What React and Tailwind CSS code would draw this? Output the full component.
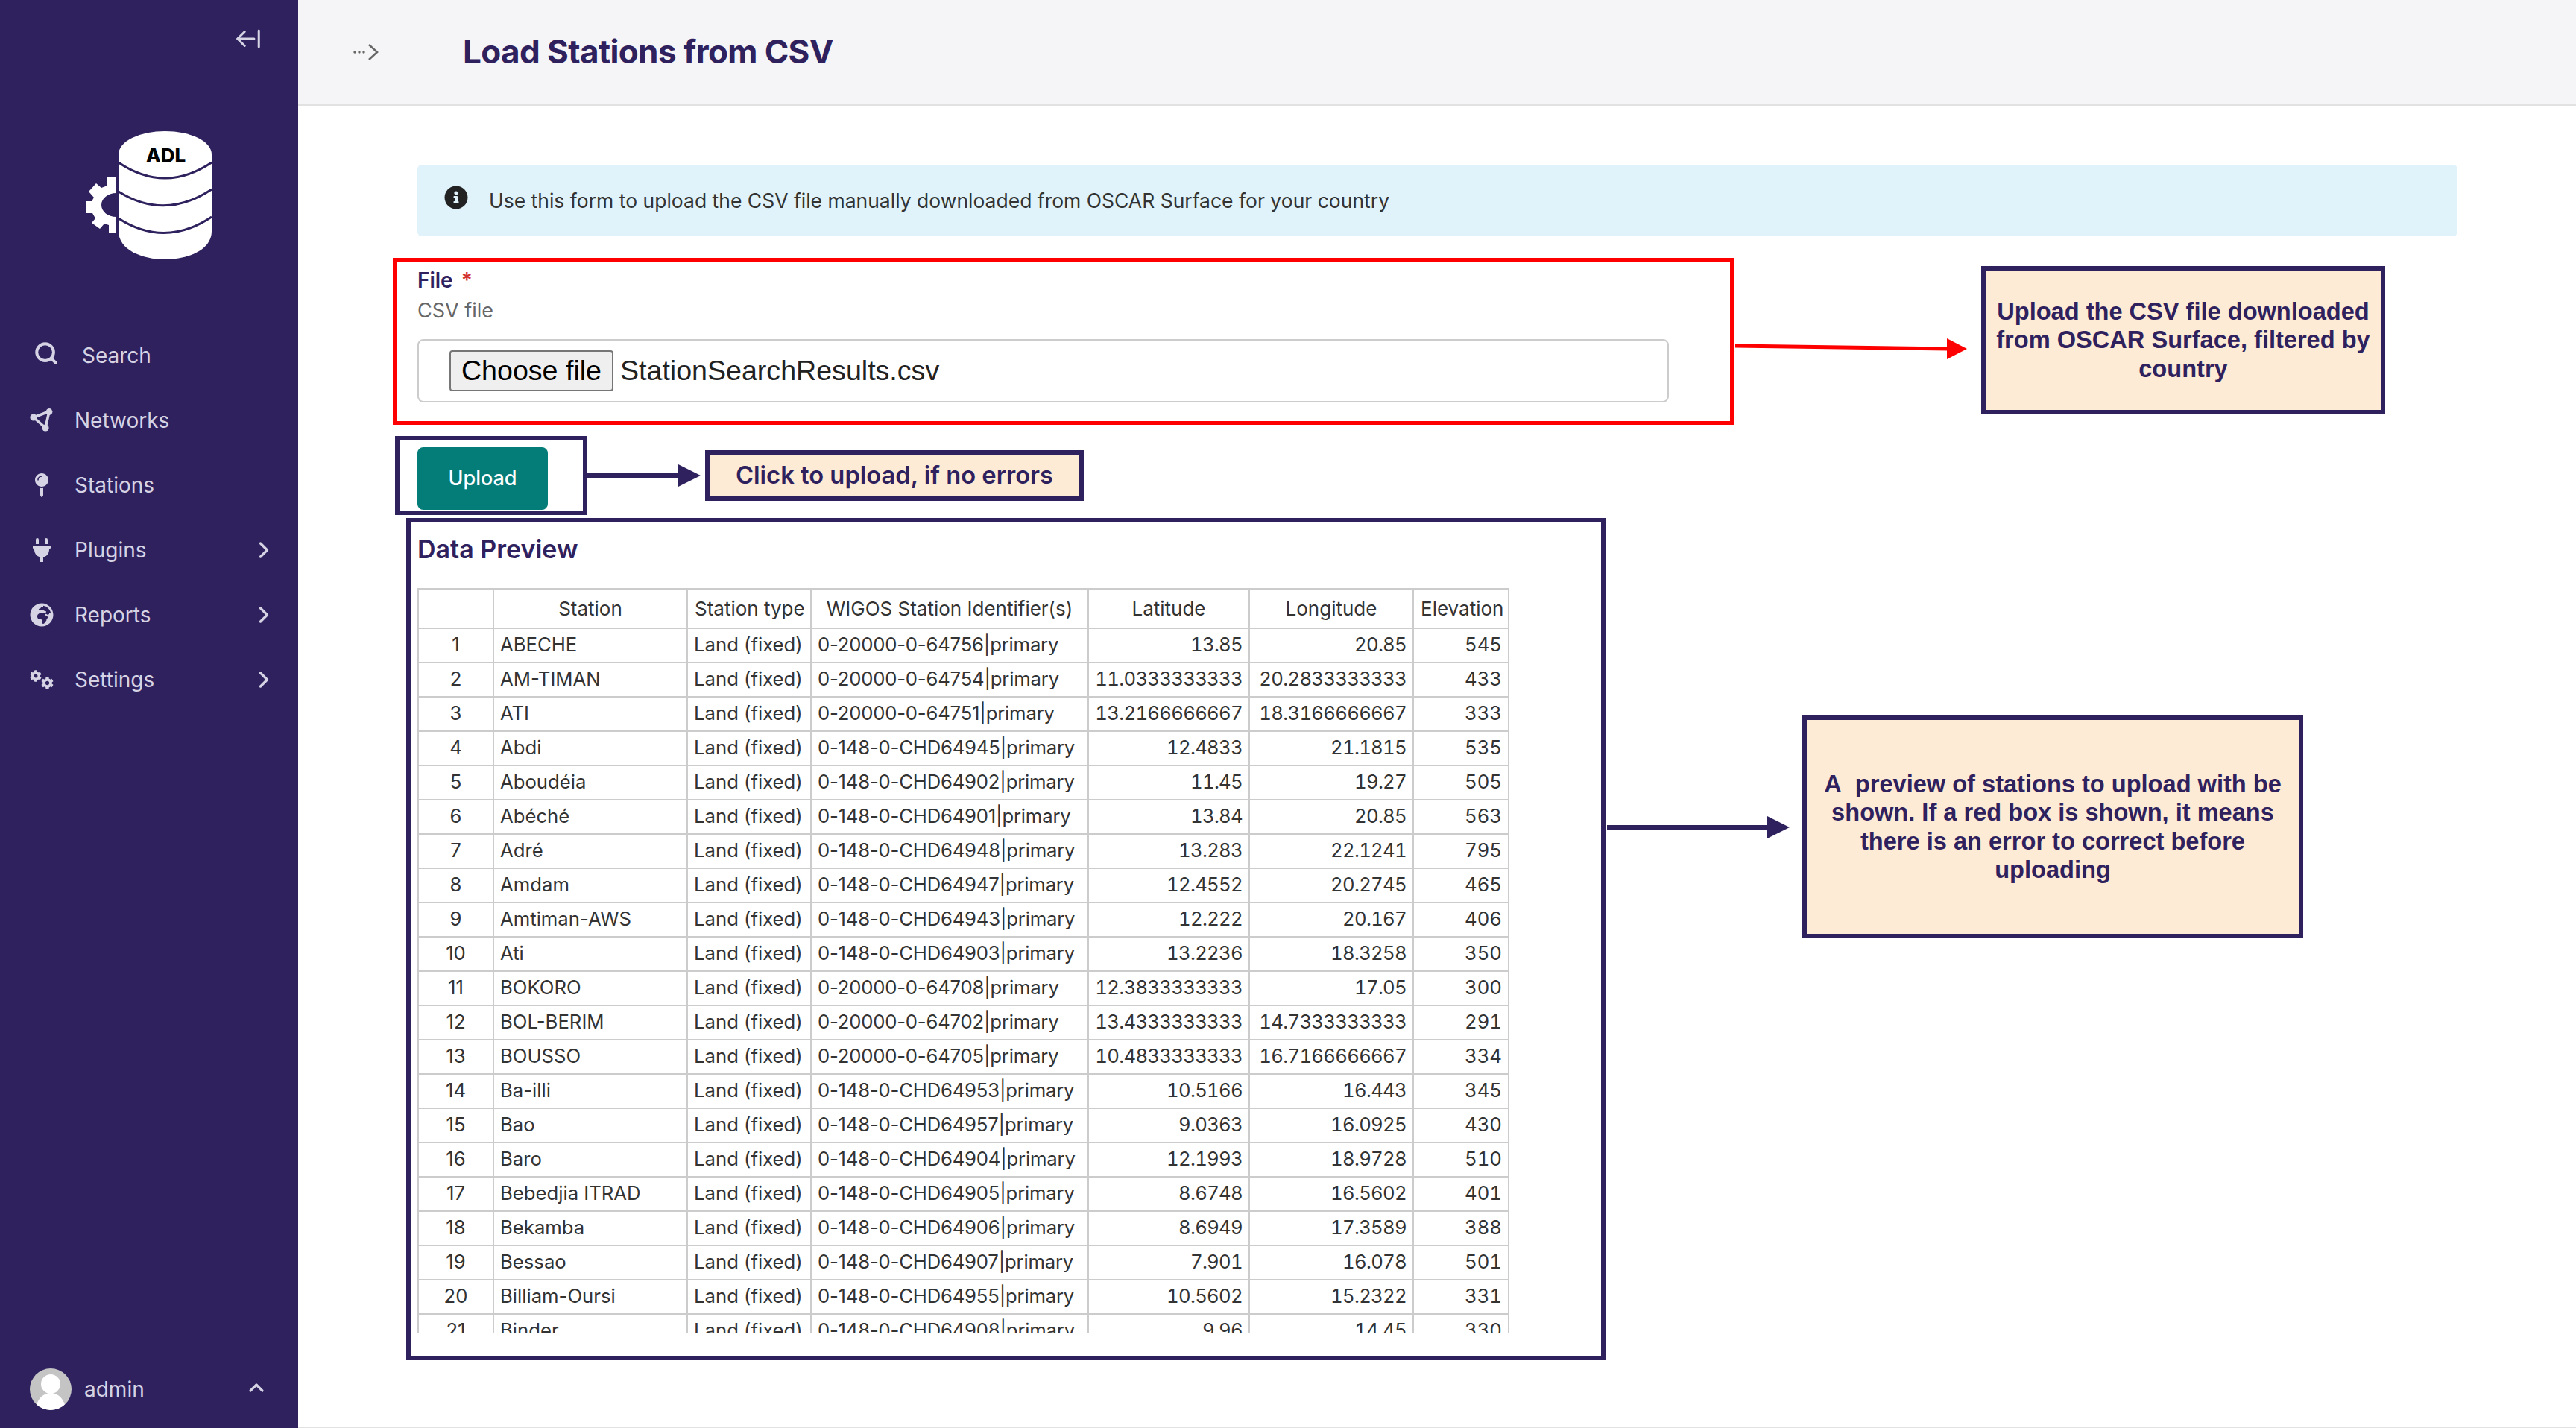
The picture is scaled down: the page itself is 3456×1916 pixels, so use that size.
import React from 'react';
import { ArrowLeftFromLine, ChevronRight, ChevronUp, Search } from 'lucide-react';
import { FaCog, FaGlobeAfrica, FaInfoCircle, FaMapPin, FaPlug } from 'react-icons/fa';

const rows = [
    ['ABECHE', '0-20000-0-64756|primary', '13.85', '20.85', '545'],
    ['AM-TIMAN', '0-20000-0-64754|primary', '11.0333333333', '20.2833333333', '433'],
    ['ATI', '0-20000-0-64751|primary', '13.2166666667', '18.3166666667', '333'],
    ['Abdi', '0-148-0-CHD64945|primary', '12.4833', '21.1815', '535'],
    ['Aboudéia', '0-148-0-CHD64902|primary', '11.45', '19.27', '505'],
    ['Abéché', '0-148-0-CHD64901|primary', '13.84', '20.85', '563'],
    ['Adré', '0-148-0-CHD64948|primary', '13.283', '22.1241', '795'],
    ['Amdam', '0-148-0-CHD64947|primary', '12.4552', '20.2745', '465'],
    ['Amtiman-AWS', '0-148-0-CHD64943|primary', '12.222', '20.167', '406'],
    ['Ati', '0-148-0-CHD64903|primary', '13.2236', '18.3258', '350'],
    ['BOKORO', '0-20000-0-64708|primary', '12.3833333333', '17.05', '300'],
    ['BOL-BERIM', '0-20000-0-64702|primary', '13.4333333333', '14.7333333333', '291'],
    ['BOUSSO', '0-20000-0-64705|primary', '10.4833333333', '16.7166666667', '334'],
    ['Ba-illi', '0-148-0-CHD64953|primary', '10.5166', '16.443', '345'],
    ['Bao', '0-148-0-CHD64957|primary', '9.0363', '16.0925', '430'],
    ['Baro', '0-148-0-CHD64904|primary', '12.1993', '18.9728', '510'],
    ['Bebedjia ITRAD', '0-148-0-CHD64905|primary', '8.6748', '16.5602', '401'],
    ['Bekamba', '0-148-0-CHD64906|primary', '8.6949', '17.3589', '388'],
    ['Bessao', '0-148-0-CHD64907|primary', '7.901', '16.078', '501'],
    ['Billiam-Oursi', '0-148-0-CHD64955|primary', '10.5602', '15.2322', '331'],
    ['Binder', '0-148-0-CHD64908|primary', '9.96', '14.45', '330'],
];

const NetworkIcon = () => (
    <svg width="32" height="32" viewBox="0 0 32 32" fill="none" stroke="#d6d3e4" strokeWidth="3.6">
        <path d="M5 12 L26 4 L21 26 Z" strokeLinejoin="round" />
        <circle cx="5" cy="12" r="4.6" fill="#d6d3e4" stroke="none" />
        <circle cx="26" cy="4.5" r="4.4" fill="#d6d3e4" stroke="none" />
        <circle cx="21" cy="26" r="4.6" fill="#d6d3e4" stroke="none" />
    </svg>
);

const SettingsIcon = () => (
    <svg width="32" height="26" viewBox="0 0 32 26">
        <FaCog size={16} x={0} y={0} />
        <FaCog size={17} x={15} y={9} />
    </svg>
);

const navItems = [
    { label: 'Search', icon: <Search size={34} strokeWidth={2.8} className="-mt-[6px]" />, iconClass: 'ml-[45px] w-[34px]', textClass: 'ml-[31px]' },
    { label: 'Networks', icon: <NetworkIcon />, iconClass: 'ml-[40px] w-[32px]', textClass: 'ml-[28px]' },
    { label: 'Stations', icon: <FaMapPin size={32} />, iconClass: 'ml-[40px] w-[32px]', textClass: 'ml-[28px]' },
    { label: 'Plugins', icon: <FaPlug size={32} />, iconClass: 'ml-[40px] w-[32px]', textClass: 'ml-[28px]', more: true },
    { label: 'Reports', icon: <FaGlobeAfrica size={32} />, iconClass: 'ml-[40px] w-[32px]', textClass: 'ml-[28px]', more: true },
    { label: 'Settings', icon: <SettingsIcon />, iconClass: 'ml-[40px] w-[32px]', textClass: 'ml-[28px]', more: true },
];

function Logo() {
    return (
        <svg width="172" height="176" viewBox="114 174 172 176" className="ml-[114px] mt-[103px] block">
            <path d="M156 238 L144 238 L144 249 L136 252 L129 246 L119 257 L126 265 L123 270 L116 270 L116 286 L124 286 L128 293 L123 299 L134 307 L140 300 L146 302 L146 312 L156 312 L156 291 C145 291 136 284 136 275 C136 266 145 259 156 259 Z" fill="#fff" />
            <path d="M159 207 V310 C159 335 190 348 221.5 348 C253 348 284 335 284 310 V207 Z" fill="#fff" />
            <ellipse cx="221.5" cy="207" rx="62.5" ry="31" fill="#fff" />
            <path d="M159 218 Q221 260 284 218" fill="none" stroke="#2e215d" strokeWidth="3" />
            <path d="M159 257 Q221 296 284 254" fill="none" stroke="#2e215d" strokeWidth="3" />
            <path d="M159 293 Q221 333 284 291" fill="none" stroke="#2e215d" strokeWidth="3" />
            <text x="222.5" y="218" textAnchor="middle" fontFamily="Inter" fontWeight="800" fontSize="26" fill="#000">ADL</text>
        </svg>
    );
}

function Sidebar() {
    return (
        <aside className="w-[400px] h-full flex flex-col shrink-0 bg-[#2e215d] text-[#d6d3e4]">
            <div className="flex justify-end pt-[33px] pr-[48px]">
                <ArrowLeftFromLine size={38} strokeWidth={1.9} />
            </div>
            <Logo />
            <nav className="mt-[83px]">
                {navItems.map((item) => (
                    <div key={item.label} className="flex items-center h-[87px] text-[28px]">
                        <span className={`flex justify-center ${item.iconClass}`}>{item.icon}</span>
                        <span className={item.textClass}>{item.label}</span>
                        {item.more && <ChevronRight size={36} strokeWidth={2.2} className="ml-auto mr-[28px]" />}
                    </div>
                ))}
            </nav>
            <div className="mt-auto mb-[24px] flex items-center pl-[40px] text-[28px]">
                <svg width="56" height="56" viewBox="0 0 56 56">
                    <clipPath id="avatar-clip"><circle cx="28" cy="28" r="28" /></clipPath>
                    <g clipPath="url(#avatar-clip)">
                        <rect width="56" height="56" fill="#c4c4c4" />
                        <ellipse cx="28" cy="21" rx="13" ry="13" fill="#fff" />
                        <ellipse cx="28" cy="56" rx="20" ry="23" fill="#fff" />
                    </g>
                </svg>
                <span className="ml-[17px]">admin</span>
                <ChevronUp size={32} strokeWidth={2.4} className="ml-auto mr-[40px] -mt-[4px]" />
            </div>
        </aside>
    );
}

function Callout({ className, children }) {
    return (
        <div className={`absolute flex items-center justify-center text-center border-[6px] border-[#2e215d] bg-[#fdebd5] text-[#2e215d] font-bold font-['Liberation_Sans',sans-serif] text-[32.6px] leading-[38.5px] ${className}`}>
            <div>{children}</div>
        </div>
    );
}

function DataTable() {
    const th = 'border-2 border-[#cccccc] font-normal text-center px-[9px] whitespace-nowrap';
    const td = 'border-2 border-[#cccccc] px-[8px] pb-[2px] whitespace-nowrap text-[25.7px]';
    return (
        <div className="ml-[9px] mt-[28px] h-[1000px] overflow-hidden">
            <table className="table-fixed border-collapse w-[1463px] text-[26px] text-[#333333]">
                <colgroup>
                    <col className="w-[101px]" />
                    <col className="w-[260px]" />
                    <col className="w-[166px]" />
                    <col className="w-[372px]" />
                    <col className="w-[216px]" />
                    <col className="w-[220px]" />
                    <col className="w-[128px]" />
                </colgroup>
                <thead>
                    <tr className="h-[53px]">
                        <th className={th}></th>
                        <th className={th}>Station</th>
                        <th className={th}>Station type</th>
                        <th className={th}>WIGOS Station Identifier(s)</th>
                        <th className={th}>Latitude</th>
                        <th className={th}>Longitude</th>
                        <th className={th}>Elevation</th>
                    </tr>
                </thead>
                <tbody>
                    {rows.map((row, i) => (
                        <tr key={row[0]} className="h-[46px]">
                            <td className={`${td} text-center`}>{i + 1}</td>
                            <td className={td}>{row[0]}</td>
                            <td className={td}>Land (fixed)</td>
                            <td className={`${td} tracking-[-0.2px]`}>{row[1]}</td>
                            <td className={`${td} text-right tabular-nums tracking-[-0.7px]`}>{row[2]}</td>
                            <td className={`${td} text-right tabular-nums tracking-[-0.7px]`}>{row[3]}</td>
                            <td className={`${td} text-right tabular-nums`}>{row[4]}</td>
                        </tr>
                    ))}
                </tbody>
            </table>
        </div>
    );
}

export default function App() {
    return (
        <div className="relative flex w-[3456px] h-[1916px] overflow-hidden bg-white font-['Inter',sans-serif]">
            <Sidebar />
            <main className="flex-1 flex flex-col border-b-2 border-[#e2e2e2]">
                <header className="flex items-center h-[142px] shrink-0 bg-[#f5f5f7] border-b-2 border-[#e2e2e2]">
                    <svg width="34" height="22" viewBox="0 0 34 22" className="ml-[74px]" fill="#666666">
                        <circle cx="2" cy="11" r="1.7" />
                        <circle cx="8" cy="11" r="1.7" />
                        <circle cx="14" cy="11" r="1.7" />
                        <path d="M21 1 L32 11 L21 21" fill="none" stroke="#666666" strokeWidth="2.6" />
                    </svg>
                    <h1 className="ml-[113px] -mt-[3px] text-[44px] tracking-[-0.6px] font-bold text-[#2e215d]">Load Stations from CSV</h1>
                </header>

                <div className="mt-[79px] ml-[160px] mr-[159px] h-[96px] flex items-center rounded-[6px] bg-[#e0f3fb] text-[26.5px] text-[#333333]">
                    <FaInfoCircle size={32} className="ml-[36px] -mt-[8px] text-[#222222] shrink-0" />
                    <span className="ml-[28px] mt-[1px]">Use this form to upload the CSV file manually downloaded from OSCAR Surface for your country</span>
                </div>

                <section className="mt-[29px] ml-[127px] w-[1799px] h-[224px] border-[5px] border-[#ff0000] pl-[28px] pt-[8px]">
                    <div className="text-[28px] leading-[34px] font-semibold text-[#2e215d]">File <span className="ml-[4px] text-[#d32f2f]">*</span></div>
                    <div className="mt-[7px] text-[27px] leading-[34px] text-[#666666]">CSV file</div>
                    <div className="mt-[21px] w-[1679px] h-[85px] flex items-center border-2 border-[#cccccc] rounded-[8px] pl-[41px] font-['Liberation_Sans',sans-serif] text-[37.6px] text-[#222222]">
                        <span className="w-[220px] h-[55px] flex items-center justify-center rounded-[4px] border-2 border-[#767676] bg-[#efefef] text-black">Choose file</span>
                        <span className="ml-[9px]">StationSearchResults.csv</span>
                    </div>
                </section>

                <div className="mt-[15px] ml-[130px] flex items-center">
                    <div className="w-[258px] h-[106px] border-[6px] border-[#2e215d] pl-[24px] pt-[9px]">
                        <button className="w-[175px] h-[84px] rounded-[8px] bg-[#047d78] text-white text-[27px] font-medium">Upload</button>
                    </div>
                    <svg width="152" height="34" viewBox="0 0 152 34">
                        <path d="M0 14 H122 V2 L152 17 L122 32 V20 H0 Z" fill="#2e215d" />
                    </svg>
                    <div className="ml-[6px] w-[508px] h-[68px] flex items-center justify-center border-[6px] border-[#2e215d] bg-[#fdebd5] text-[#2e215d] text-[32.7px] font-semibold">
                        Click to upload, if no errors
                    </div>
                </div>

                <section className="mt-[4px] ml-[145px] w-[1609px] h-[1130px] border-[6px] border-[#2e215d]">
                    <h2 className="ml-[9px] mt-[12px] text-[34px] leading-[48px] font-semibold text-[#2e215d]">Data Preview</h2>
                    <DataTable />
                </section>
            </main>

            <svg width="320" height="40" viewBox="0 0 320 40" className="absolute left-[2326px] top-[448px]">
                <path d="M286 6 L313 20 L286 34 Z" fill="#ff0000" />
                <path d="M2 16 L290 20" stroke="#ff0000" strokeWidth="5" fill="none" />
            </svg>
            <Callout className="left-[2658px] top-[357px] w-[542px] h-[199px]">
                Upload the CSV file downloaded<br />from OSCAR Surface, filtered by<br />country
            </Callout>

            <svg width="246" height="34" viewBox="0 0 246 34" className="absolute left-[2156px] top-[1093px]">
                <path d="M0 14 H215 V2 L245 17 L215 32 V20 H0 Z" fill="#2e215d" />
            </svg>
            <Callout className="left-[2418px] top-[960px] w-[672px] h-[299px]">
                A&nbsp; preview of stations to upload with be<br />shown. If a red box is shown, it means<br />there is an error to correct before<br />uploading
            </Callout>
        </div>
    );
}
